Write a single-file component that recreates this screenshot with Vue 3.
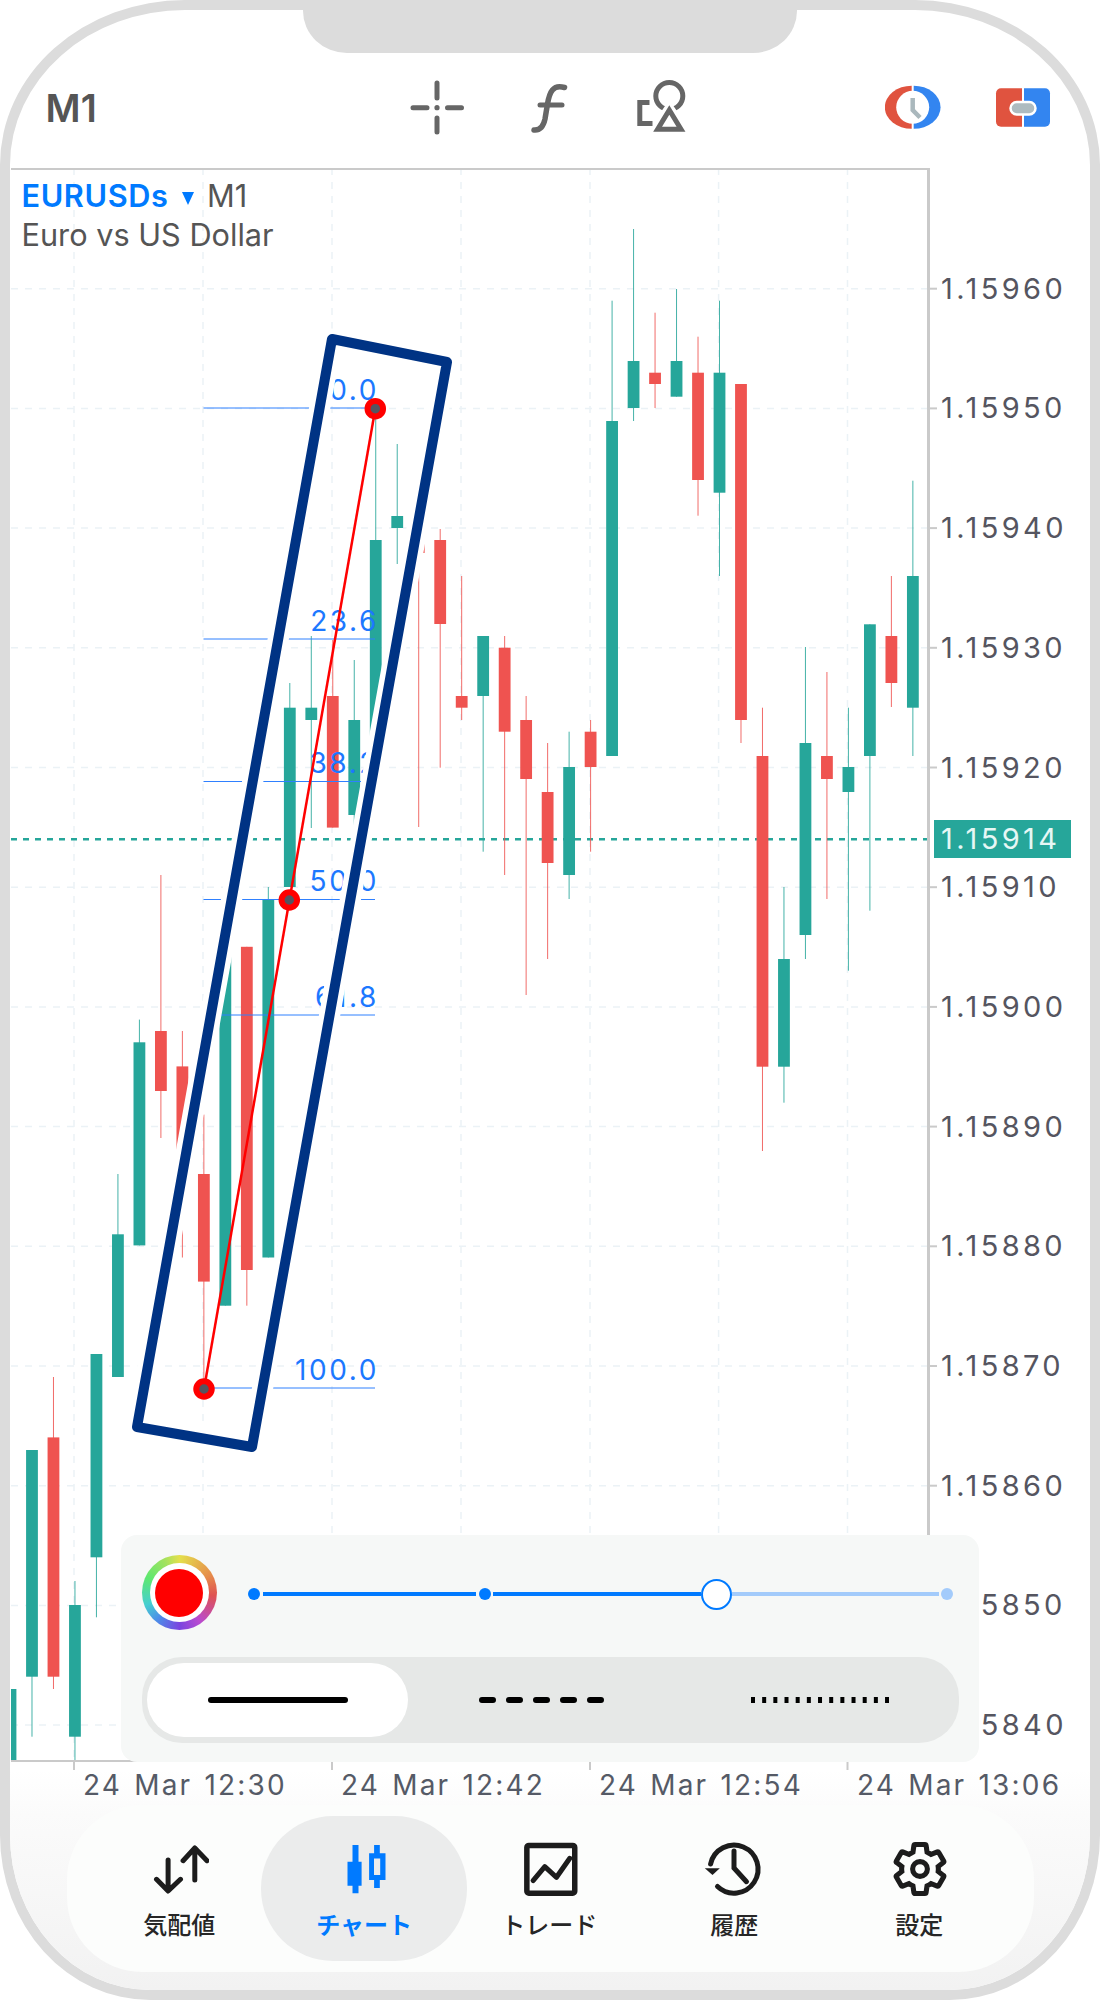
<template>
  <div class="phone">
    <div class="notch"></div>

    <header class="top-bar">
      <span class="period">M1</span>
      <svg class="ic-cross" width="60" height="60" viewBox="407 78 60 60">
        <path d="M413 107.7h14M447.5 107.7h14M437 83v15M437 118v14" fill="none" stroke="#666" stroke-width="5" stroke-linecap="round" />
        <circle cx="437" cy="107.7" r="2.6" fill="#666" />
      </svg>
      <svg class="ic-func" width="44" height="60" viewBox="527 78 44 60">
        <path d="M564.5 87.5C553 84 549.5 92 547.5 104L545 119C543 128 539 130.5 534 130" fill="none" stroke="#666" stroke-width="5.5" stroke-linecap="round" />
        <path d="M540 105h22" fill="none" stroke="#666" stroke-width="5" stroke-linecap="round" />
      </svg>
      <svg class="ic-shape" width="60" height="60" viewBox="632 78 60 60">
        <circle cx="669.3" cy="96" r="13.5" fill="none" stroke="#666" stroke-width="5" />
        <path d="M669.3 109.5L683 129.5H655.6Z" fill="#fff" stroke="#fff" stroke-width="11" />
        <path d="M669.3 110L681 129.3H657.6Z" fill="#fff" stroke="#666" stroke-width="5" />
        <path d="M649.5 102.5H639.8V123.5H652.5" fill="none" stroke="#666" stroke-width="5" />
      </svg>
      <svg class="ic-clock" width="57" height="60" viewBox="885 78 57 60">
        <path d="M911.7 85.7A26.8 21.5 0 0 0 911.7 128.8Z" fill="#e0533f" />
        <path d="M913.7 85.7A26.8 21.5 0 0 1 913.7 128.8Z" fill="#3385f0" />
        <circle cx="912.7" cy="107.3" r="16.5" fill="#fff" />
        <path d="M912.7 98V110L920 117.5" fill="none" stroke="#aab8bd" stroke-width="4.5" />
      </svg>
      <svg class="ic-link" width="58" height="60" viewBox="994 78 58 60">
        <path d="M1001 88.3H1022V126.7H1001A5 5 0 0 1 996 121.7V93.3A5 5 0 0 1 1001 88.3Z" fill="#e0533f" />
        <path d="M1024 88.3H1045A5 5 0 0 1 1050 93.3V121.7A5 5 0 0 1 1045 126.7H1024Z" fill="#3385f0" />
        <rect x="1010.5" y="102" width="25" height="12.5" rx="6.2" fill="#aebbc0" stroke="#fff" stroke-width="2.5" />
      </svg>
    </header>

    <div class="chart">
      <svg class="chart-svg" width="1080" height="1602" viewBox="10 168 1080 1602">
        <defs>
          <clipPath id="plot-clip">
            <rect x="11" y="168" width="917" height="1593" />
          </clipPath>
        </defs>

        <g clip-path="url(#plot-clip)">
          <line v-for="y in priceTicks" :key="'h' + y.label" x1="11" x2="928" :y1="y.y" :y2="y.y" class="grid-line" />
          <line v-for="x in gridX" :key="'v' + x" :x1="x" :x2="x" y1="168" y2="1761" class="grid-line" />
          <line x1="11" x2="928" y1="839.3" y2="839.3" class="now-line" />
          <g v-for="c in candles" :key="c.i">
            <line v-if="c.high !== c.low" :x1="c.x" :x2="c.x" :y1="c.high" :y2="c.low" :stroke="c.color" class="wick" />
            <rect :x="c.x - 5.9" :y="c.top" width="11.8" :height="c.bottom - c.top" :fill="c.color" />
          </g>
        </g>

        <line x1="11" x2="928" y1="169" y2="169" class="axis" />
        <line x1="928.5" x2="928.5" y1="168" y2="1762" class="axis axis-right" />
        <line x1="11" x2="928" y1="1761" y2="1761" class="axis" />
        <line v-for="t in priceTicks" :key="'t' + t.label" x1="929" x2="937" :y1="t.y" :y2="t.y" class="axis" />
        <line v-for="x in timeTicks" :key="'tt' + x" :x1="x" :x2="x" y1="1761" y2="1770" class="axis" />

        <text v-for="t in priceTicks" :key="t.label" x="941" :y="t.y + 10" class="price">{{ t.label }}</text>

        <rect x="934" y="820" width="137" height="38" fill="#26a69a" />
        <text x="941" y="849.3" class="price price-now">1.15914</text>

        <g v-for="f in fibLevels" :key="f.label">
          <line x1="203.5" x2="375" :y1="f.y" :y2="f.y" class="fib-line" />
          <text x="379" :y="f.y - 8.5" class="fib-text">{{ f.label }}</text>
        </g>

        <polygon :points="framePoints" class="frame-halo" />
        <polygon :points="framePoints" class="frame" />

        <line x1="375.3" y1="408.7" x2="204" y2="1389" class="fib-trend" />
        <g v-for="m in markers" :key="m.y">
          <circle :cx="m.x" :cy="m.y" r="7.75" fill="#555560" stroke="#f00" stroke-width="6" />
        </g>
      </svg>

      <div class="symbol">
        <div class="symbol-row">
          <b class="pair">EURUSDs</b><i class="caret"></i><span>M1</span>
        </div>
        <div>Euro vs US Dollar</div>
      </div>

      <div class="panel">
        <div class="width-row">
          <div class="ring">
            <div class="ring-gap"><div class="ring-color"></div></div>
          </div>
          <div class="slider">
            <i class="stop"></i>
            <i class="bar"></i>
            <i class="stop"></i>
            <i class="bar bar-to-thumb"></i>
            <i class="thumb"></i>
            <i class="bar bar-off"></i>
            <i class="stop stop-off"></i>
          </div>
        </div>
        <div class="styles">
          <div class="style-item selected">
            <svg width="140" height="8"><line x1="3" x2="137" y1="4" y2="4" stroke="#000" stroke-width="6" stroke-linecap="round" /></svg>
          </div>
          <div class="style-item">
            <svg width="126" height="8"><line x1="3" x2="125" y1="4" y2="4" stroke="#000" stroke-width="6" stroke-linecap="round" stroke-dasharray="11 16" /></svg>
          </div>
          <div class="style-item dotted">
            <svg width="138" height="8"><line x1="0" x2="138" y1="4" y2="4" stroke="#000" stroke-width="6" stroke-dasharray="4 7.17" /></svg>
          </div>
        </div>
      </div>
    </div>

    <div class="bottom">
      <div class="times">
        <span v-for="t in timeLabels" :key="t">{{ t }}</span>
      </div>

      <nav class="tabs">
        <div class="tab">
          <svg width="60" height="60" viewBox="0 0 60 60">
            <path d="M45.8 10V42M34.1 22.7L45.8 10L58 22.7M19.1 22V52M7.5 41.3L19.1 53L31.5 41.3" fill="none" stroke="#1c1c1c" stroke-width="5" stroke-linecap="round" stroke-linejoin="round" />
          </svg>
          <span>気配値</span>
        </div>
        <div class="tab active">
          <svg width="60" height="60" viewBox="0 0 60 60">
            <path d="M18.5 7h6v16.7h3.1v24h-3.1v7.6h-6v-7.6h-5v-24h5z" fill="#007aff" />
            <path d="M40.1 7h5.7v8.3h5.7V42h-5.7v8h-5.7v-8h-5V15.3h5zM40 20.5V37h6.2V20.5z" fill="#007aff" fill-rule="evenodd" />
          </svg>
          <span>チャート</span>
        </div>
        <div class="tab">
          <svg width="60" height="60" viewBox="0 0 60 60">
            <rect x="7.85" y="7.45" width="47.9" height="47.8" rx="2" fill="none" stroke="#1c1c1c" stroke-width="5.5" />
            <path d="M14.1 42.7L25.8 28.7L37.5 39.3L50.8 20.3" fill="none" stroke="#1c1c1c" stroke-width="5" stroke-linecap="round" stroke-linejoin="round" />
          </svg>
          <span>トレード</span>
        </div>
        <div class="tab">
          <svg width="60" height="60" viewBox="0 0 60 60">
            <path d="M6.6 26A24 24 0 1 1 13.5 48.5" fill="none" stroke="#1c1c1c" stroke-width="5" stroke-linecap="round" />
            <path d="M0.8 30.3H15.8L8.5 37Z" fill="#1c1c1c" />
            <path d="M30 13V30L42.5 43.7" fill="none" stroke="#1c1c1c" stroke-width="5" stroke-linecap="round" />
          </svg>
          <span>履歴</span>
        </div>
        <div class="tab">
          <svg width="60" height="60" viewBox="0 0 60 60">
            <g transform="translate(0.4 0.4) scale(2.55)" fill="none" stroke="#1c1c1c" stroke-width="2">
              <path d="M19.14 12.94c.04-.3.06-.61.06-.94 0-.32-.02-.64-.07-.94l2.03-1.58c.18-.14.23-.41.12-.61l-1.92-3.32c-.12-.22-.37-.29-.59-.22l-2.39.96c-.5-.38-1.03-.7-1.62-.94l-.36-2.54c-.04-.24-.24-.41-.48-.41h-3.84c-.24 0-.43.17-.47.41l-.36 2.54c-.59.24-1.13.57-1.62.94l-2.39-.96c-.22-.08-.47 0-.59.22L2.74 8.87c-.12.21-.08.47.12.61l2.03 1.58c-.05.3-.09.63-.09.94s.02.64.07.94l-2.03 1.58c-.18.14-.23.41-.12.61l1.92 3.32c.12.22.37.29.59.22l2.39-.96c.5.38 1.03.7 1.62.94l.36 2.54c.05.24.24.41.48.41h3.84c.24 0 .44-.17.47-.41l.36-2.54c.59-.24 1.13-.56 1.62-.94l2.39.96c.22.08.47 0 .59-.22l1.92-3.32c.12-.22.07-.47-.12-.61l-2.01-1.58z" />
              <circle cx="12" cy="12" r="2.9" />
            </g>
          </svg>
          <span>設定</span>
        </div>
      </nav>
    </div>
  </div>
</template>

<script setup>
const GREEN = '#26a69a'
const RED = '#ef5350'

// [up, high, bodyTop, bodyBottom, low] in page pixels, one row per bar
const bars = [
  [1, 1689, 1689, 1770, 1770],
  [1, 1450, 1450, 1676.7, 1736.7],
  [0, 1377, 1437.4, 1676.7, 1689],
  [1, 1581, 1605, 1736.7, 1760],
  [1, 1354, 1354, 1557.3, 1617.3],
  [1, 1174, 1234.3, 1377, 1377],
  [1, 1019.6, 1042.3, 1245.4, 1245.4],
  [0, 875, 1031, 1091, 1138],
  [0, 1031, 1066.4, 1150, 1257.5],
  [0, 1114.6, 1174, 1281.6, 1389],
  [1, 930, 930, 1305.7, 1305.7],
  [0, 946.8, 946.8, 1270, 1305.7],
  [1, 887, 899.5, 1257.5, 1257.5],
  [1, 683, 707.7, 887, 887],
  [1, 636, 707.7, 720, 828],
  [0, 640, 696, 827.6, 827.6],
  [1, 660, 720, 815, 827],
  [1, 408, 540, 760, 760],
  [1, 444, 516, 528, 564],
  [0, 520, 535, 553, 827],
  [0, 529, 540, 624, 767.7],
  [0, 576, 696, 707.7, 720],
  [1, 636, 636, 696, 851.7],
  [0, 636, 647.7, 731.7, 875],
  [0, 696, 720, 779, 995],
  [0, 743, 792, 863, 959],
  [1, 731.7, 767, 875, 899],
  [0, 720, 731.7, 767, 851.7],
  [1, 300.7, 421, 756, 756],
  [1, 229, 361, 408, 421],
  [0, 312.7, 372.7, 384, 408],
  [1, 289, 361, 396.7, 396.7],
  [0, 336.7, 372.7, 480, 515.7],
  [1, 300.7, 372.7, 492.7, 576],
  [0, 384, 384, 720, 743],
  [0, 707.7, 756, 1066.7, 1151],
  [1, 887, 959, 1066.7, 1102.7],
  [1, 647, 743, 935, 959],
  [0, 672, 756, 779, 899],
  [1, 707.7, 767, 792, 970.7],
  [1, 624.3, 624.3, 756, 910.7],
  [0, 576, 636, 683, 707],
  [1, 480.7, 576, 707.7, 756]
]

const candles = bars.map(([up, high, top, bottom, low], i) => ({
  i,
  x: 10.5 + 21.485 * i,
  color: up ? GREEN : RED,
  high,
  top,
  bottom,
  low
}))

const priceTicks = Array.from({ length: 13 }, (_, n) => ({
  y: 288.7 + 119.7 * n,
  label: (1.1596 - n * 0.0001).toFixed(5)
}))

const gridX = [74, 203, 332, 461, 590, 718.6, 847.5]
const timeTicks = [74, 332, 590, 847.5]
const timeLabels = ['24 Mar 12:30', '24 Mar 12:42', '24 Mar 12:54', '24 Mar 13:06']

const fibLevels = [
  { label: '0.0', y: 408 },
  { label: '23.6', y: 639 },
  { label: '38.2', y: 781.5 },
  { label: '50.0', y: 899.5 },
  { label: '61.8', y: 1015 },
  { label: '100.0', y: 1388 }
]

const markers = [
  { x: 375.3, y: 408.7 },
  { x: 289.3, y: 900 },
  { x: 204, y: 1389 }
]

const framePoints = '332,339 447,362 252,1447 137,1427'
</script>

<style scoped>
.phone {
  position: relative;
  display: flex;
  flex-direction: column;
  box-sizing: border-box;
  width: 1100px;
  height: 2000px;
  overflow: hidden;
  border: 10px solid #dcdcdc;
  border-radius: 185px 185px 150px 150px / 165px;
  background: #fff;
  font-family: Inter, "Noto Sans CJK JP", sans-serif;
}

.notch {
  position: absolute;
  top: 0;
  left: 293px;
  width: 493.5px;
  height: 42.7px;
  border-radius: 0 0 44px 44px / 0 0 42px 42px;
  background: #dcdcdc;
}

.top-bar {
  display: flex;
  flex: none;
  box-sizing: border-box;
  height: 158px;
  padding: 68px 0 0 35.6px;
  align-items: flex-start;
}

.period {
  width: 52px;
  color: #555;
  font-size: 38px;
  font-weight: 600;
  line-height: 60px;
}

.ic-cross { margin-left: 309.4px; }
.ic-func { margin-left: 60px; }
.ic-shape { margin-left: 61px; }
.ic-clock { margin-left: 193px; }
.ic-link { margin-left: 52px; }

.chart {
  position: relative;
  flex: none;
  height: 1602px;
}

.chart-svg {
  display: block;
}

.grid-line {
  stroke: #ebf2f6;
  stroke-width: 1.5;
  stroke-dasharray: 7 7;
}

.now-line {
  stroke: #26a69a;
  stroke-width: 2.5;
  stroke-dasharray: 6 6;
}

.wick {
  stroke-width: 1;
  opacity: 0.85;
}

.axis {
  stroke: #cacaca;
  stroke-width: 2;
}

.axis-right {
  stroke-width: 3;
}

.price {
  fill: #555560;
  font-family: Inter, sans-serif;
  font-size: 29px;
  letter-spacing: 3.4px;
}

.price-now {
  fill: #e6f7f5;
}

.fib-line {
  stroke: #2f80ff;
  stroke-width: 1;
}

.fib-text {
  fill: #1c78ff;
  font-family: Inter, sans-serif;
  font-size: 28px;
  letter-spacing: 2.6px;
  text-anchor: end;
}

.frame-halo {
  fill: none;
  stroke: #fff;
  stroke-width: 21;
  stroke-linejoin: round;
}

.frame {
  fill: none;
  stroke: #003384;
  stroke-width: 10;
  stroke-linejoin: round;
}

.fib-trend {
  stroke: #f00;
  stroke-width: 2.5;
}

.symbol {
  position: absolute;
  top: 8px;
  left: 11.5px;
  color: #555;
  font-size: 30.7px;
  line-height: 39px;
}

.symbol-row {
  display: flex;
  align-items: center;
}

.pair {
  color: #007aff;
  font-weight: 600;
  letter-spacing: 0.6px;
}

.caret {
  width: 0;
  height: 0;
  margin: 5px 13px 0 13.5px;
  border-top: 13px solid #007aff;
  border-right: 6.5px solid transparent;
  border-left: 6.5px solid transparent;
}

.panel {
  position: absolute;
  top: 1367px;
  left: 110.7px;
  display: flex;
  flex-direction: column;
  gap: 27px;
  box-sizing: border-box;
  width: 858.3px;
  height: 227px;
  padding: 20px 20px 0 21px;
  border-radius: 16px;
  background: #f6f8f7;
}

.width-row {
  display: flex;
  align-items: center;
}

.ring {
  display: flex;
  flex: none;
  width: 75.4px;
  height: 75.4px;
  border-radius: 50%;
  align-items: center;
  justify-content: center;
  background: conic-gradient(#e4e04c, #e68d4b 60deg, #df5252 95deg, #b94bd0 145deg, #7a45e0 180deg, #4b8fe8 220deg, #46cfd0 250deg, #5ee870 295deg, #a2e25f 335deg, #e4e04c);
}

.ring-gap {
  display: flex;
  width: 58.6px;
  height: 58.6px;
  border-radius: 50%;
  align-items: center;
  justify-content: center;
  background: #fff;
}

.ring-color {
  width: 48px;
  height: 48px;
  border-radius: 50%;
  background: #f00;
}

.slider {
  display: flex;
  flex: 1;
  align-items: center;
  margin: 3px 0 0 31px;
}

.stop {
  flex: none;
  width: 12px;
  height: 12px;
  border-radius: 50%;
  background: #007aff;
}

.bar {
  flex: none;
  width: 213.7px;
  height: 4px;
  margin: 0 2.5px;
  background: #007aff;
}

.bar-to-thumb {
  width: 208px;
  margin-right: 0;
}

.thumb {
  flex: none;
  box-sizing: border-box;
  width: 31px;
  height: 31px;
  border: 2px solid #007aff;
  border-radius: 50%;
  background: #fff;
}

.bar-off {
  width: 206.5px;
  margin-left: 0;
  background: #a3cbfb;
}

.stop-off {
  background: #a3cbfb;
}

.styles {
  display: grid;
  grid-template-columns: 261px 267px 1fr;
  box-sizing: border-box;
  width: 817.3px;
  height: 85.4px;
  padding: 5.4px;
  border-radius: 40px;
  background: #e6e8e7;
}

.style-item {
  display: flex;
  align-items: center;
  justify-content: center;
}

.dotted {
  padding-left: 12px;
}

.selected {
  border-radius: 37px;
  background: #fff;
}

.bottom {
  flex: 1;
  background: linear-gradient(#fff, #fbfbfb 20%, #f2f2f2);
}

.times {
  display: flex;
  height: 32px;
  padding-left: 73px;
  color: #555a66;
  font-size: 28px;
  letter-spacing: 2.2px;
  word-spacing: 2px;
  line-height: 30px;
}

.times span {
  flex: none;
  width: 258px;
}

.tabs {
  display: grid;
  grid-template-columns: repeat(5, 185px);
  box-sizing: border-box;
  width: 967px;
  height: 167px;
  margin: 3px 0 0 56.7px;
  padding: 11px 20px;
  border-radius: 75px;
  background: #fcfdfc;
}

.tab {
  display: flex;
  flex-direction: column;
  align-items: center;
  padding-top: 11px;
  color: #262626;
  font-size: 24px;
  font-weight: 500;
}

.tab svg {
  display: block;
  margin-top: 11px;
}

.tab span {
  margin-top: 10px;
  line-height: 36px;
}

.active {
  margin: 0 -10.5px;
  border-radius: 72px;
  color: #007aff;
  font-weight: 700;
  background: #ebecec;
}
</style>

<style>
html,
body {
  margin: 0;
  background: #fff;
}
</style>
